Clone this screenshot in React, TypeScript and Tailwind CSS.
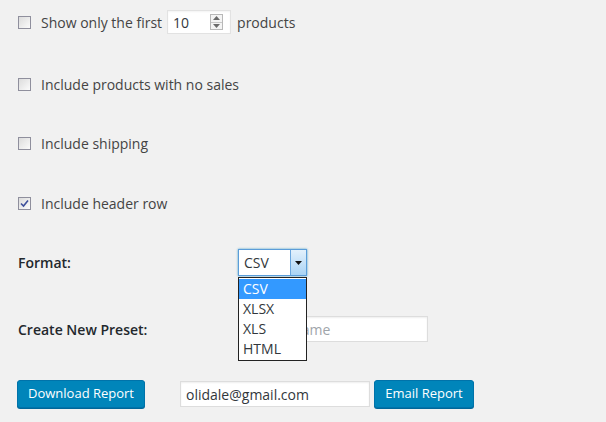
import React from 'react';

const font = { fontFamily: '"Open Sans", "Liberation Sans", sans-serif' };

function Box({ checked = false }: { checked?: boolean }) {
  return (
    <span className="flex h-[13px] w-[13px] shrink-0 items-center justify-center border border-[#8f8f9d] bg-gradient-to-br from-[#dcdcdc] to-[#fbfbfb]">
      {checked && (
        <svg width="9" height="9" viewBox="0 0 9 9">
          <path d="M1 4.5 L3.5 7 L8 1.5" fill="none" stroke="#3d4f9b" strokeWidth="1.6" />
        </svg>
      )}
    </span>
  );
}

function CheckRow({ label, checked, className }: { label: React.ReactNode; checked?: boolean; className: string }) {
  return (
    <div className={`flex items-center gap-[10px] pl-[18px] ${className}`}>
      <Box checked={checked} />
      <span className="text-[14px] text-[#444]">{label}</span>
    </div>
  );
}

export default function App() {
  const options = ['CSV', 'XLSX', 'XLS', 'HTML'];
  return (
    <div className="relative h-[422px] w-[606px] overflow-hidden bg-[#f1f1f1] pt-[10px]" style={font}>
      {/* Show only the first */}
      <div className="flex h-[24px] items-center pl-[18px]">
        <Box />
        <span className="ml-[10px] text-[14px] text-[#444]">Show only the first</span>
        <div className="ml-[5px] flex h-[24px] w-[64px] items-center justify-between border border-[#e2e2e2] bg-white pl-[5px] pr-[7px] shadow-[inset_0_1px_2px_rgba(0,0,0,0.05)]">
          <span className="text-[14px] text-[#32373c]">10</span>
          <span className="flex h-[16px] w-[13px] flex-col border border-[#b8b8b8] bg-[#f4f4f4]">
            <span className="flex flex-1 items-center justify-center border-b border-[#c8c8c8]">
              <svg width="7" height="4" viewBox="0 0 7 4"><path d="M0 4 L3.5 0 L7 4Z" fill="#6a6a6a" /></svg>
            </span>
            <span className="flex flex-1 items-center justify-center">
              <svg width="7" height="4" viewBox="0 0 7 4"><path d="M0 0 L3.5 4 L7 0Z" fill="#6a6a6a" /></svg>
            </span>
          </span>
        </div>
        <span className="ml-[6px] text-[14px] text-[#444]">products</span>
      </div>

      <CheckRow className="mt-[40px] h-[20px]" label="Include products with no sales" />
      <CheckRow className="mt-[39px] h-[20px]" label="Include shipping" />
      <CheckRow className="mt-[40px] h-[20px]" label="Include header row" checked />

      {/* Format */}
      <div className="mt-[36px] flex h-[27px] items-center">
        <span className="w-[238px] pl-[18px] text-[14px] font-semibold text-[#23282d]">Format:</span>
        <div className="relative flex h-[27px] w-[69px] items-stretch border border-[#5b9dd9] bg-white shadow-[0_0_2px_rgba(30,140,190,0.8)]">
          <span className="flex flex-1 items-center pl-[5px] text-[14px] text-[#32373c]">CSV</span>
          <span className="flex w-[16px] items-center justify-center border-l border-[#6aa6de] bg-gradient-to-b from-[#e3f1fc] to-[#a9d3f4]">
            <svg width="7" height="4" viewBox="0 0 7 4"><path d="M0 0 L3.5 4 L7 0Z" fill="#111" /></svg>
          </span>
          <ul className="absolute left-[-1px] top-[27px] z-10 w-[69px] border border-[#222] bg-white py-px">
            {options.map((o, i) => (
              <li
                key={o}
                className={`h-[20px] pl-[4px] text-[14px] leading-[20px] ${i === 0 ? 'bg-[#3399ff] text-white' : 'text-[#32373c]'}`}
              >
                {o}
              </li>
            ))}
          </ul>
        </div>
      </div>

      {/* Preset */}
      <div className="mt-[40px] flex h-[26px] items-center">
        <span className="w-[238px] pl-[18px] text-[14px] font-semibold text-[#23282d]">Create New Preset:</span>
        <input
          readOnly
          placeholder="Preset Name"
          className="h-[26px] w-[190px] border border-[#ddd] bg-white px-[7px] text-[14px] text-[#32373c] shadow-[inset_0_1px_2px_rgba(0,0,0,0.07)] outline-none placeholder:text-[#a0a5aa]"
        />
      </div>

      {/* Actions */}
      <div className="mt-[38px] flex h-[28px] items-center pl-[17px]">
        <button className="h-[28px] w-[128px] rounded-[3px] border border-[#0073aa] bg-[#0085ba] text-[13px] text-white shadow-[0_1px_0_#006799]">
          Download Report
        </button>
        <input
          readOnly
          value="olidale@gmail.com"
          className="ml-[35px] h-[26px] w-[190px] border border-[#ddd] bg-white px-[5px] text-[14px] text-[#32373c] shadow-[inset_0_1px_2px_rgba(0,0,0,0.07)] outline-none"
        />
        <button className="ml-[4px] h-[28px] w-[100px] rounded-[3px] border border-[#0073aa] bg-[#0085ba] text-[13px] text-white shadow-[0_1px_0_#006799]">
          Email Report
        </button>
      </div>
    </div>
  );
}
